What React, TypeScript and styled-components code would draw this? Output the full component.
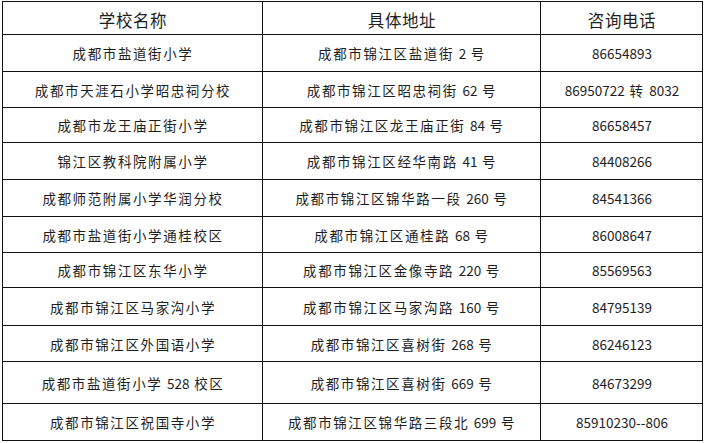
import React from 'react'
import styled, { createGlobalStyle } from 'styled-components'

const GlobalStyle = createGlobalStyle`
  html, body {
    margin: 0;
    padding: 0;
    background: #ffffff;
  }
  body {
    font-family: "Noto Sans CJK SC", "Noto Sans", sans-serif;
    color: #1e1e1e;
  }
`

type School = {
  name: string
  address: string
  phone: string
  h: number
}

const schools: School[] = [
  { name: '成都市盐道街小学', address: '成都市锦江区盐道街 2 号', phone: '86654893', h: 37 },
  { name: '成都市天涯石小学昭忠祠分校', address: '成都市锦江区昭忠祠街 62 号', phone: '86950722 转 8032', h: 36 },
  { name: '成都市龙王庙正街小学', address: '成都市锦江区龙王庙正街 84 号', phone: '86658457', h: 35 },
  { name: '锦江区教科院附属小学', address: '成都市锦江区经华南路 41 号', phone: '84408266', h: 37 },
  { name: '成都师范附属小学华润分校', address: '成都市锦江区锦华路一段 260 号', phone: '84541366', h: 37 },
  { name: '成都市盐道街小学通桂校区', address: '成都市锦江区通桂路 68 号', phone: '86008647', h: 36 },
  { name: '成都市锦江区东华小学', address: '成都市锦江区金像寺路 220 号', phone: '85569563', h: 35 },
  { name: '成都市锦江区马家沟小学', address: '成都市锦江区马家沟路 160 号', phone: '84795139', h: 38 },
  { name: '成都市锦江区外国语小学', address: '成都市锦江区喜树街 268 号', phone: '86246123', h: 36 },
  { name: '成都市盐道街小学 528 校区', address: '成都市锦江区喜树街 669 号', phone: '84673299', h: 42 },
  { name: '成都市锦江区祝国寺小学', address: '成都市锦江区锦华路三段北 699 号', phone: '85910230--806', h: 37 },
]

// digits keep their natural width, the chinese characters are spaced out
const Spaced: React.FC<{ text: string }> = ({ text }) => (
  <>
    {text.split(/([0-9\-]+)/).map((part, i) =>
      /^[0-9\-]+$/.test(part) ? <Num key={i}>{part}</Num> : <span key={i}>{part}</span>
    )}
  </>
)

const App: React.FC = () => {
  return (
    <>
      <GlobalStyle />
      <Page>
        <Table>
          <Row $h={33}>
            <HeadCell>学校名称</HeadCell>
            <HeadCell>具体地址</HeadCell>
            <HeadCell>咨询电话</HeadCell>
          </Row>
          {schools.map((s) => (
            <Row key={s.name} $h={s.h}>
              <Cell><Spaced text={s.name} /></Cell>
              <Cell><Spaced text={s.address} /></Cell>
              <Cell><Spaced text={s.phone} /></Cell>
            </Row>
          ))}
        </Table>
      </Page>
    </>
  )
}

const Page = styled.div`
  width: 704px;
  height: 443px;
  padding: 1px 0 0 2px;
  box-sizing: border-box;
  overflow: hidden;
`

const Table = styled.div`
  display: flex;
  flex-direction: column;
  width: 701px;
  border-left: 1px solid #111;
  border-top: 1px solid #111;
  box-sizing: border-box;
`

const Row = styled.div<{ $h: number }>`
  display: grid;
  grid-template-columns: 260px 278px 162px;
  height: ${(p) => p.$h}px;
`

const Cell = styled.div`
  display: flex;
  align-items: center;
  justify-content: center;
  border-right: 1px solid #111;
  border-bottom: 1px solid #111;
  box-sizing: border-box;
  font-size: 13.5px;
  letter-spacing: 1.6px;
  white-space: pre;
  padding-left: 1px;
`

const HeadCell = styled(Cell)`
  font-size: 16.5px;
  letter-spacing: 0.6px;
  padding-top: 3px;
`

const Num = styled.span`
  letter-spacing: 0;
`

export default App
